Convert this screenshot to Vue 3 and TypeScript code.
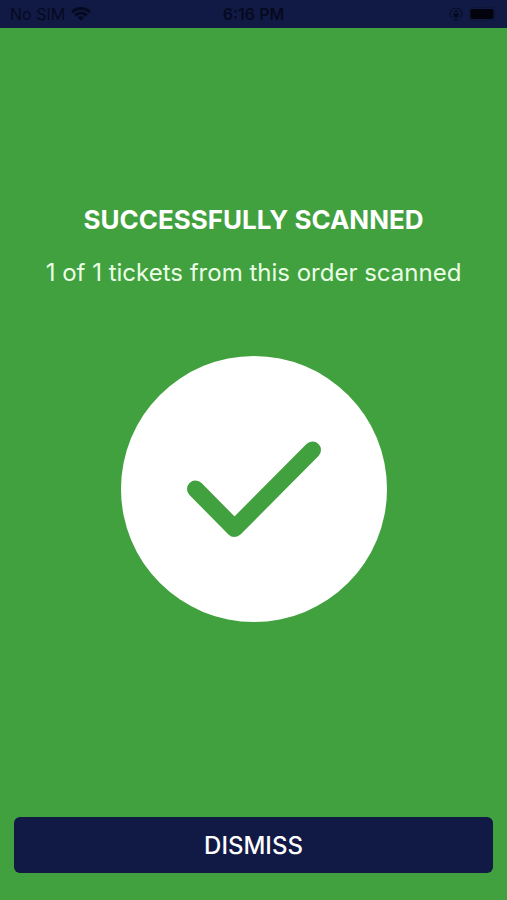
<script setup lang="ts">
import { computed, ref } from 'vue'

interface ScanResult {
  title: string
  scanned: number
  total: number
}

const result: ScanResult = { title: 'SUCCESSFULLY SCANNED', scanned: 1, total: 1 }
const summary = computed(
  () => `${result.scanned} of ${result.total} tickets from this order scanned`
)
const dismissed = ref(false)
</script>

<template>
  <div class="screen">
    <header class="status-bar">
      <div class="carrier">
        <span>No SIM</span>
        <svg class="wifi" viewBox="0 0 20 14" aria-hidden="true">
          <path d="M1.2 5.2a12.6 12.6 0 0 1 17.6 0" />
          <path d="M4.3 8.4a8.1 8.1 0 0 1 11.4 0" />
          <path class="solid" d="M10 13.8 6.8 10.6a4.6 4.6 0 0 1 6.4 0z" />
        </svg>
      </div>
      <time class="clock">6:16 PM</time>
      <div class="indicators">
        <svg class="lock" viewBox="0 0 14 14" aria-hidden="true">
          <path d="M2.6 11.2a6 6 0 1 1 8.8 0M4.4 12.4a6 6 0 0 0 5.2 0" />
          <path d="M5.4 7V5.4a1.6 1.6 0 0 1 3.2 0V7" />
          <rect class="solid" x="4.4" y="6.4" width="5.2" height="3.8" rx="0.6" />
        </svg>
        <svg class="battery" viewBox="0 0 28 14" aria-hidden="true">
          <rect class="case" x="0.5" y="0.5" width="25" height="13" rx="3" />
          <rect class="level" x="1.5" y="2" width="23" height="10" rx="2" />
          <path class="case" d="M27 5.500v3" />
        </svg>
      </div>
    </header>

    <main v-show="!dismissed" class="result">
      <h1 class="title">{{ result.title }}</h1>
      <p class="summary">{{ summary }}</p>
      <svg class="badge" viewBox="0 0 266 266" role="img" aria-label="Success">
        <circle cx="133" cy="133" r="133" />
        <path d="M74.5 133 113.5 172.5 191.5 94" />
      </svg>
    </main>

    <footer v-show="!dismissed" class="actions">
      <button class="dismiss" type="button" @click="dismissed = true">DISMISS</button>
    </footer>
  </div>
</template>

<style>
body {
  background: #41a13e;
}
</style>

<style scoped>
.screen {
  display: flex;
  flex-direction: column;
  min-height: 100vh;
  background: #41a13e;
  color: #fff;
  font-family: Inter, "Liberation Sans", sans-serif;
}

.status-bar {
  display: grid;
  grid-template-columns: 1fr auto 1fr;
  align-items: center;
  height: 28px;
  padding: 0 10px;
  background: #111a44;
  color: #050a20;
  font-size: 16px;
  line-height: 28px;
}

.carrier,
.indicators {
  display: flex;
  align-items: center;
  gap: 6px;
}

.indicators {
  justify-content: flex-end;
}

.clock {
  font-weight: 600;
}

.wifi,
.lock {
  fill: none;
  stroke: currentColor;
}

.wifi {
  width: 20px;
  height: 14px;
  stroke-width: 3;
}

.lock {
  width: 14px;
  height: 14px;
  stroke-width: 1;
}

.wifi .solid,
.lock .solid {
  fill: currentColor;
  stroke: none;
}

.battery {
  width: 28px;
  height: 14px;
}

.battery .case {
  fill: none;
  stroke: #0e1639;
}

.battery .level {
  fill: #02030c;
}

.result {
  display: flex;
  flex: 1;
  flex-direction: column;
  align-items: center;
  padding: 176px 16px 24px;
  text-align: center;
}

.title {
  margin: 0;
  font-size: 26px;
  font-weight: 700;
  line-height: 32px;
}

.summary {
  margin: 20px 0 0;
  color: #eaffe6;
  font-size: 24px;
  line-height: 34px;
}

.badge {
  width: 266px;
  height: 266px;
  margin-top: 66px;
}

.badge circle {
  fill: #fff;
}

.badge path {
  fill: none;
  stroke: #41a13e;
  stroke-width: 17;
  stroke-linecap: round;
  stroke-linejoin: round;
}

.actions {
  padding: 0 14px 27px;
}

.dismiss {
  display: block;
  width: 100%;
  height: 56px;
  padding: 2px 0 0;
  border: 0;
  border-radius: 6px;
  background: #111a44;
  color: #fff;
  font-family: inherit;
  font-size: 24px;
  font-weight: 500;
  line-height: 54px;
  cursor: pointer;
}
</style>
